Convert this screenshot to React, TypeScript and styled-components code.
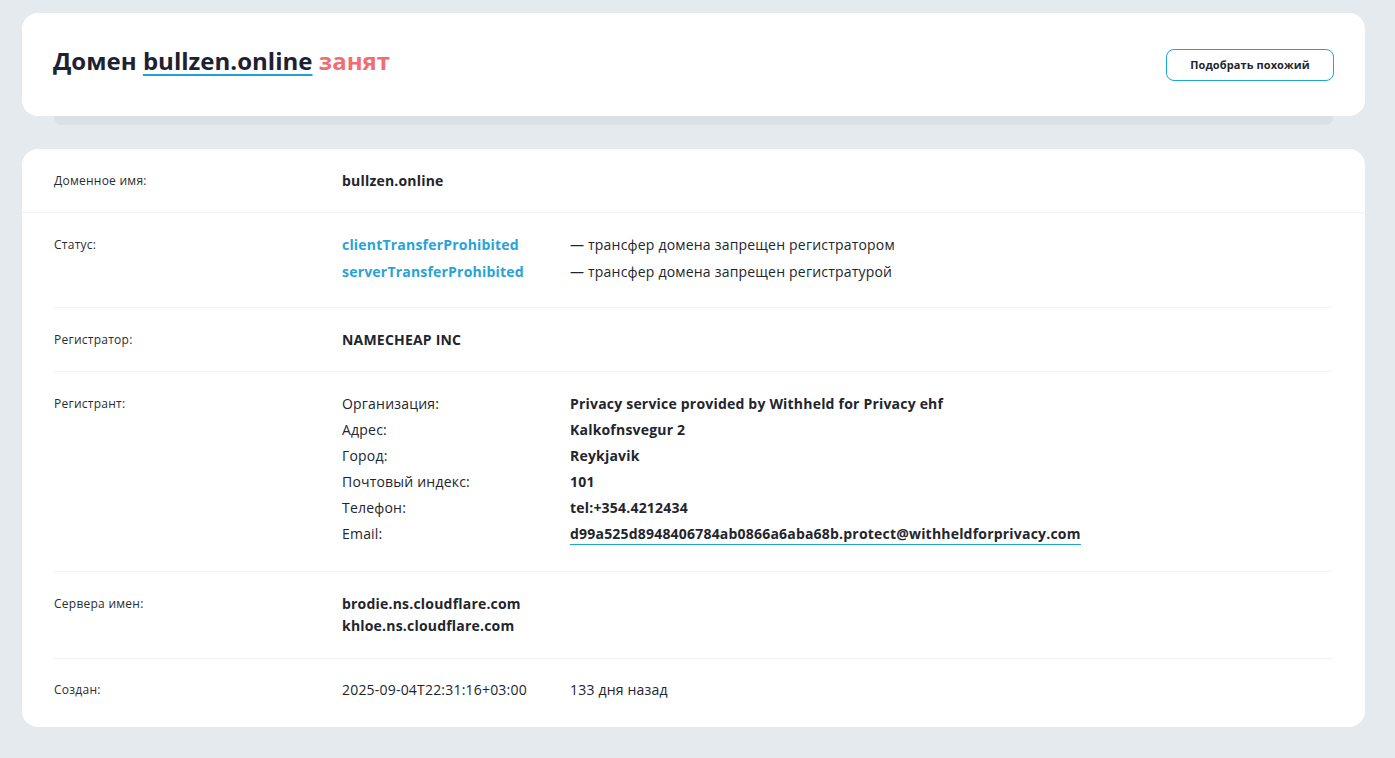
import React from "react";
import styled, { createGlobalStyle } from "styled-components";

const Global = createGlobalStyle`
  html, body { margin: 0; padding: 0; background: #e5eaee; }
  body { font-family: "Open Sans", "Noto Sans", sans-serif; color: #22252d; }
  * { box-sizing: border-box; }
`;

const Page = styled.div`
  padding: 13px 30px 32px 22px;
  display: flex;
  flex-direction: column;
  gap: 33px;
`;

const HeadCard = styled.div`
  position: relative;
  background: #fff;
  border-radius: 16px;
  height: 103px;
  padding: 0 31px 0 31px;
  display: flex;
  align-items: center;
  justify-content: space-between;
  &::after {
    content: "";
    position: absolute;
    left: 32px;
    right: 32px;
    top: 100%;
    height: 9px;
    background: #dce1e6;
    border-radius: 0 0 8px 8px;
  }
`;

const Title = styled.h1`
  margin: -8px 0 0;
  font-size: 24px;
  font-weight: 700;
  color: #1e2130;
  letter-spacing: 0.02px;
`;

const DomainLink = styled.span`
  text-decoration: underline;
  text-decoration-color: #1ea3d8;
  text-decoration-thickness: 1.5px;
  text-underline-offset: 4px;
`;

const Busy = styled.span`
  color: #f36d70;
`;

const Button = styled.button`
  height: 32px;
  width: 168px;
  margin-top: 0px;
  border: 1px solid #1ea5da;
  border-radius: 8px;
  background: #fff;
  font-family: "Open Sans", sans-serif;
  font-weight: 700;
  font-size: 11px;
  letter-spacing: 0.1px;
  color: #22252d;
  cursor: pointer;
`;

const InfoCard = styled.div`
  background: #fff;
  border-radius: 16px;
  padding: 0 32px 0 32px;
`;

const Row = styled.div<{ $pt?: number; $pb?: number; $full?: boolean }>`
  display: grid;
  grid-template-columns: 288px 1fr;
  padding: ${(p) => p.$pt ?? 21}px 0 ${(p) => p.$pb ?? 20}px;
  border-bottom: 1px solid #f0f2f4;
  ${(p) => (p.$full ? "margin: 0 -32px; padding-left: 32px; padding-right: 32px;" : "")}
  &:last-child { border-bottom: none; }
`;

const Label = styled.div`
  font-size: 12px;
  line-height: 22px;
  letter-spacing: 0.25px;
  color: #2a2c33;
`;

const Lines = styled.div<{ $gap?: number }>`
  display: flex;
  flex-direction: column;
  gap: ${(p) => p.$gap ?? 0}px;
`;

const Pair = styled.div`
  display: grid;
  grid-template-columns: 228px 1fr;
  font-size: 14px;
  line-height: 22px;
`;

const Value = styled.span<{ $bold?: boolean; $blue?: boolean }>`
  font-size: 14px;
  line-height: 22px;
  letter-spacing: 0.2px;
  font-weight: ${(p) => (p.$bold ? 700 : 400)};
  color: ${(p) => (p.$blue ? "#28a3d8" : "#22252d")};
`;

const Email = styled.span`
  font-weight: 700;
  letter-spacing: 0.2px;
  border-bottom: 1px solid #1ea3d8;
  line-height: 20px;
  margin-top: 1px;
  display: inline-block;
  justify-self: start;
`;

export default function App() {
  return (
    <>
      <Global />
      <Page>
        <HeadCard>
          <Title>
            Домен <DomainLink>bullzen.online</DomainLink> <Busy>занят</Busy>
          </Title>
          <Button>Подобрать похожий</Button>
        </HeadCard>
        <InfoCard>
          <Row $full>
            <Label>Доменное имя:</Label>
            <Value $bold>bullzen.online</Value>
          </Row>
          <Row $pb={24}>
            <Label>Статус:</Label>
            <Lines $gap={5}>
              <Pair>
                <Value $bold $blue>clientTransferProhibited</Value>
                <Value>— трансфер домена запрещен регистратором</Value>
              </Pair>
              <Pair>
                <Value $bold $blue>serverTransferProhibited</Value>
                <Value>— трансфер домена запрещен регистратурой</Value>
              </Pair>
            </Lines>
          </Row>
          <Row>
            <Label>Регистратор:</Label>
            <Value $bold>NAMECHEAP INC</Value>
          </Row>
          <Row $pb={26}>
            <Label>Регистрант:</Label>
            <Lines $gap={4}>
              <Pair>
                <Value>Организация:</Value>
                <Value $bold>Privacy service provided by Withheld for Privacy ehf</Value>
              </Pair>
              <Pair>
                <Value>Адрес:</Value>
                <Value $bold>Kalkofnsvegur 2</Value>
              </Pair>
              <Pair>
                <Value>Город:</Value>
                <Value $bold>Reykjavik</Value>
              </Pair>
              <Pair>
                <Value>Почтовый индекс:</Value>
                <Value $bold>101</Value>
              </Pair>
              <Pair>
                <Value>Телефон:</Value>
                <Value $bold>tel:+354.4212434</Value>
              </Pair>
              <Pair>
                <Value>Email:</Value>
                <Email>d99a525d8948406784ab0866a6aba68b.protect@withheldforprivacy.com</Email>
              </Pair>
            </Lines>
          </Row>
          <Row $pb={21}>
            <Label>Сервера имен:</Label>
            <Lines>
              <Value $bold>brodie.ns.cloudflare.com</Value>
              <Value $bold>khloe.ns.cloudflare.com</Value>
            </Lines>
          </Row>
          <Row $pt={20} $pb={26}>
            <Label>Создан:</Label>
            <Pair>
              <Value>2025-09-04T22:31:16+03:00</Value>
              <Value>133 дня назад</Value>
            </Pair>
          </Row>
        </InfoCard>
      </Page>
    </>
  );
}
